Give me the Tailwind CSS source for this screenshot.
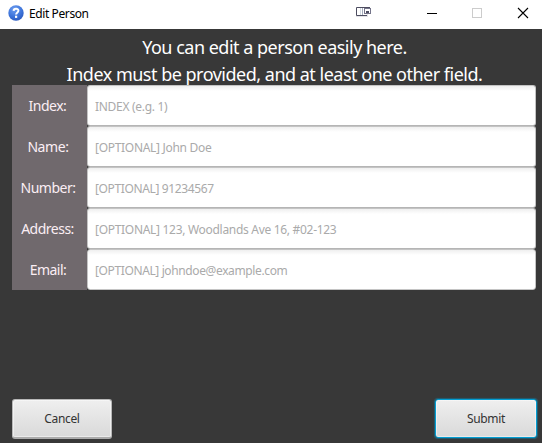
<!DOCTYPE html>
<html lang="en">
<head>
<meta charset="utf-8">
<title>Edit Person</title>
<script src="https://cdn.jsdelivr.net/npm/@tailwindcss/browser@4"></script>
</head>
<body class="w-[542px] h-[443px] overflow-hidden bg-[#383838] flex flex-col font-['Noto_Sans','Open_Sans',sans-serif]">
<header class="h-[29px] shrink-0 bg-white flex items-center text-black">
  <svg class="ml-2 size-4 -mt-[3px]" viewBox="0 0 16 16">
    <defs><radialGradient id="g" cx=".4" cy=".25" r=".8"><stop offset="0" stop-color="#6d9df0"/><stop offset=".6" stop-color="#3d74da"/><stop offset="1" stop-color="#2a58bd"/></radialGradient></defs>
    <circle cx="8" cy="8" r="7.7" fill="url(#g)"/>
    <path d="M5.600 5.900C5.700 3.100 10.500 3.100 10.400 5.800C10.300 7.500 8.100 7.500 8.100 9.600" fill="none" stroke="#fff" stroke-width="2"/>
    <rect x="7" y="10.700" width="2.200" height="2.200" fill="#fff"/>
  </svg>
  <span class="ml-[5px] -mt-[2px] w-[70px] text-[12px] whitespace-nowrap tracking-[-0.4px]">Edit Person</span>
  <svg class="ml-auto w-[186px] h-[29px]" viewBox="0 0 186 29" fill="none">
    <rect x="-1" y="9" width="13" height="8" fill="#e4e4e8"/>
    <rect x=".5" y="7.500" width="10" height="8" fill="#fff"/>
    <path d="M14 7.500H.5V15.500H11" stroke="#4d4d60"/>
    <path d="M4.500 8V15" stroke="#d0d8e0"/><path d="M6.500 8V15" stroke="#a5adbd"/>
    <rect x="8.500" y="8.500" width="6" height="5" fill="#fff" stroke="#74748a"/>
    <rect x="10" y="11" width="3" height="2" fill="#4d4d60"/>
    <path d="M71 13.500H81" stroke="#000"/>
    <rect x="116.500" y="8.500" width="9" height="9" stroke="#ccc"/>
    <path d="M162 8L172 18M172 8L162 18" stroke="#000" stroke-width="1.100"/>
  </svg>
</header>
<main class="grow flex flex-col pl-3 pr-[6px]">
  <div class="h-14 shrink-0 pt-[5px] pl-[1px] text-white text-[18px] leading-[27px] text-center whitespace-nowrap">
    <p class="tracking-[-0.5px]">You can edit a person easily here.</p>
    <p class="tracking-[-0.5px]">Index must be provided, and at least one other field.</p>
  </div>
  <form class="grid grid-cols-[75px_449px] auto-rows-[41px] whitespace-nowrap">
    <label class="bg-[#70696d] text-[#fbeef4] text-[14px] flex items-center justify-center pr-[4px] tracking-[-0.5px]"><span>Index:</span></label>
    <div class="rounded-[3px] border border-[#c4c4c4] border-b-[#b5b5b5] bg-[linear-gradient(#efefef,#fff_5px)] text-[#aaa] text-[12px] flex items-center pl-[7px] pt-[2px] tracking-[-0.3px]"><span>INDEX (e.g. 1)</span></div>
    <label class="bg-[#70696d] text-[#fbeef4] text-[14px] flex items-center justify-center pr-[3px] tracking-[-0.4px]"><span>Name:</span></label>
    <div class="rounded-[3px] border border-[#c4c4c4] border-b-[#b5b5b5] bg-[linear-gradient(#efefef,#fff_5px)] text-[#aaa] text-[12px] flex items-center pl-[7px] pt-[2px] tracking-[-0.3px]"><span>[OPTIONAL] John Doe</span></div>
    <label class="bg-[#70696d] text-[#fbeef4] text-[14px] flex items-center justify-center pr-[3px] tracking-[-0.5px]"><span>Number:</span></label>
    <div class="rounded-[3px] border border-[#c4c4c4] border-b-[#b5b5b5] bg-[linear-gradient(#efefef,#fff_5px)] text-[#aaa] text-[12px] flex items-center pl-[7px] pt-[2px] tracking-[-0.37px]"><span>[OPTIONAL] 91234567</span></div>
    <label class="bg-[#70696d] text-[#fbeef4] text-[14px] flex items-center justify-center pr-[4px] tracking-[-0.5px]"><span>Address:</span></label>
    <div class="rounded-[3px] border border-[#c4c4c4] border-b-[#b5b5b5] bg-[linear-gradient(#efefef,#fff_5px)] text-[#aaa] text-[12px] flex items-center pl-[7px] pt-[2px] tracking-[-0.3px]"><span>[OPTIONAL] 123, Woodlands Ave 16, #02-123</span></div>
    <label class="bg-[#70696d] text-[#fbeef4] text-[14px] flex items-center justify-center pr-[3px] tracking-[-0.5px]"><span>Email:</span></label>
    <div class="rounded-[3px] border border-[#c4c4c4] bg-[linear-gradient(#efefef,#fff_5px)] text-[#aaa] text-[12px] flex items-center pl-[7px] pt-[2px] tracking-[-0.38px]"><span>[OPTIONAL] johndoe@example.com</span></div>
  </form>
  <div class="mt-auto mb-[4px] -mr-[1px] flex justify-between items-start text-[12px] text-[#333]">
    <button class="w-[100px] h-10 rounded-[3px] border border-[#b8b8b8] border-b-2 border-b-[#aaa] bg-linear-to-b from-[#efefef] to-[#d9d9d9] shadow-[inset_0_0_0_1px_#ffffff70] tracking-[-0.35px]">Cancel</button>
    <button class="w-[102px] h-[39px] rounded-[3px] border border-[#039ed3] bg-linear-to-b from-[#efefef] to-[#d9d9d9] shadow-[inset_0_0_0_1px_#ffffff70,0_0_1px_1px_#039ed366] tracking-[-0.3px]">Submit</button>
  </div>
</main>
</body>
</html>
